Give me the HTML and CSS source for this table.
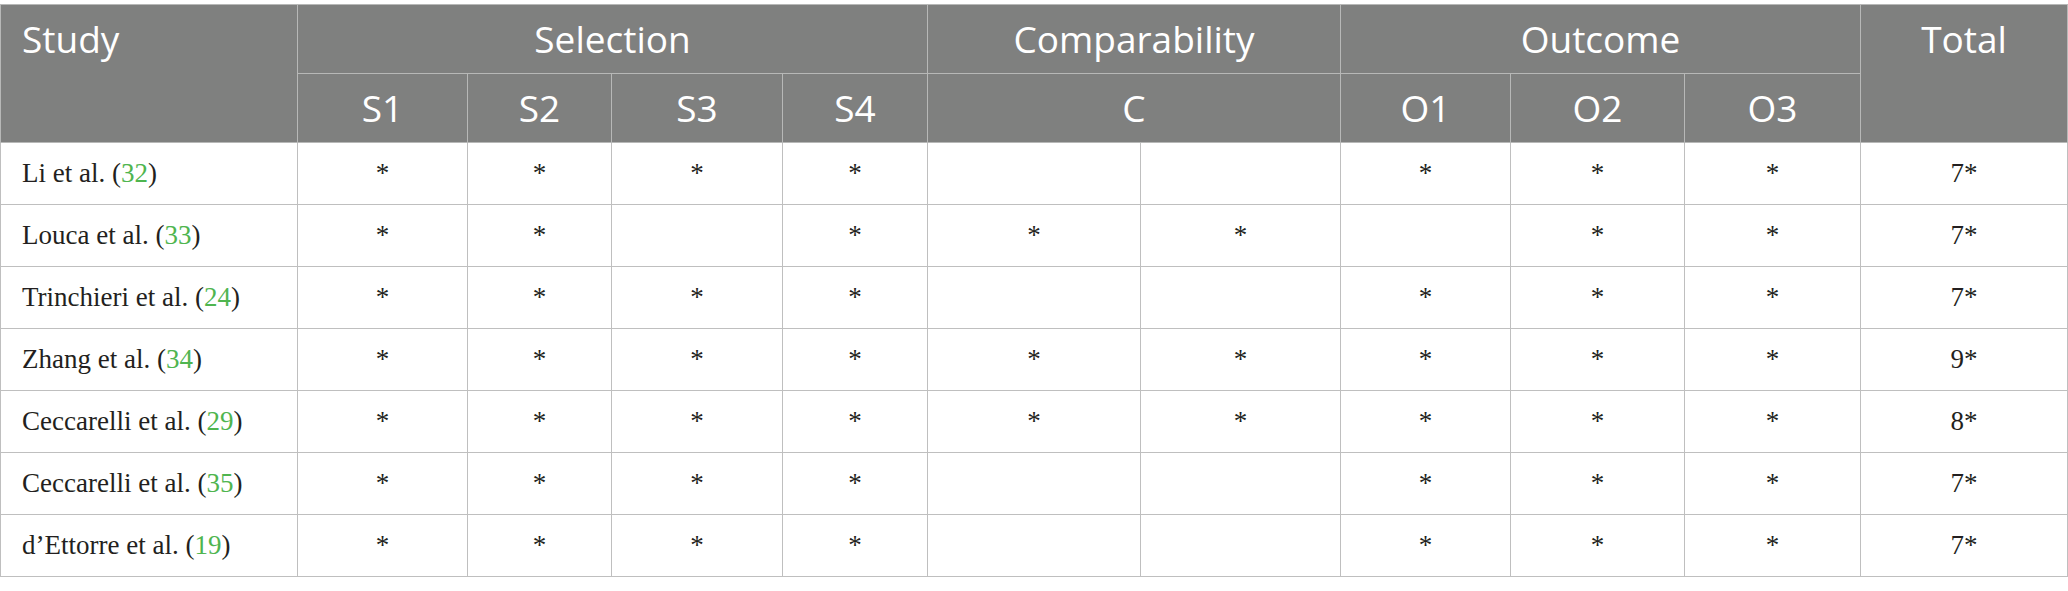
FILE: index.html
```html
<!DOCTYPE html>
<html lang="en">
<head>
<meta charset="utf-8">
<title>Quality assessment</title>
<link rel="stylesheet" href="styles.css">
</head>
<body>
<table class="nos">
  <colgroup>
    <col class="c-study">
    <col class="c-s1"><col class="c-s2"><col class="c-s3"><col class="c-s4">
    <col class="c-c1"><col class="c-c2">
    <col class="c-o1"><col class="c-o2"><col class="c-o3">
    <col class="c-total">
  </colgroup>
  <thead>
    <tr class="hrow">
      <th rowspan="2" class="h-left h-top">Study</th>
      <th colspan="4">Selection</th>
      <th colspan="2">Comparability</th>
      <th colspan="3">Outcome</th>
      <th rowspan="2" class="h-top">Total</th>
    </tr>
    <tr class="hrow">
      <th>S1</th><th>S2</th><th>S3</th><th>S4</th>
      <th colspan="2">C</th>
      <th>O1</th><th>O2</th><th>O3</th>
    </tr>
  </thead>
  <tbody>
    <tr><td class="study">Li et al. (<span class="ref">32</span>)</td><td>*</td><td>*</td><td>*</td><td>*</td><td></td><td></td><td>*</td><td>*</td><td>*</td><td>7*</td></tr>
    <tr><td class="study">Louca et al. (<span class="ref">33</span>)</td><td>*</td><td>*</td><td></td><td>*</td><td>*</td><td>*</td><td></td><td>*</td><td>*</td><td>7*</td></tr>
    <tr><td class="study">Trinchieri et al. (<span class="ref">24</span>)</td><td>*</td><td>*</td><td>*</td><td>*</td><td></td><td></td><td>*</td><td>*</td><td>*</td><td>7*</td></tr>
    <tr><td class="study">Zhang et al. (<span class="ref">34</span>)</td><td>*</td><td>*</td><td>*</td><td>*</td><td>*</td><td>*</td><td>*</td><td>*</td><td>*</td><td>9*</td></tr>
    <tr><td class="study">Ceccarelli et al. (<span class="ref">29</span>)</td><td>*</td><td>*</td><td>*</td><td>*</td><td>*</td><td>*</td><td>*</td><td>*</td><td>*</td><td>8*</td></tr>
    <tr><td class="study">Ceccarelli et al. (<span class="ref">35</span>)</td><td>*</td><td>*</td><td>*</td><td>*</td><td></td><td></td><td>*</td><td>*</td><td>*</td><td>7*</td></tr>
    <tr><td class="study">d’Ettorre et al. (<span class="ref">19</span>)</td><td>*</td><td>*</td><td>*</td><td>*</td><td></td><td></td><td>*</td><td>*</td><td>*</td><td>7*</td></tr>
  </tbody>
</table>
</body>
</html>
```
FILE: styles.css
```css
html, body {
  margin: 0;
  padding: 0;
  background: #ffffff;
}

body {
  padding-top: 4px;
}

.nos {
  border-collapse: collapse;
  table-layout: fixed;
  width: 2067px;
}

.c-study { width: 297px; }
.c-s1 { width: 170px; }
.c-s2 { width: 144px; }
.c-s3 { width: 171px; }
.c-s4 { width: 145px; }
.c-c1 { width: 213px; }
.c-c2 { width: 200px; }
.c-o1 { width: 170px; }
.c-o2 { width: 174px; }
.c-o3 { width: 176px; }
.c-total { width: 207px; }

.nos th {
  background: #7f807f;
  color: #ffffff;
  font-family: "Open Sans", "DejaVu Sans", sans-serif;
  font-weight: 400;
  font-size: 37px;
  line-height: 48px;
  height: 48px;
  padding: 10px 8px;
  text-align: center;
  vertical-align: middle;
  border: 1px solid #b7b8b7;
}

.nos th.h-top {
  vertical-align: top;
}

.nos th.h-left {
  text-align: left;
  padding-left: 21px;
}

.nos td {
  font-family: "Liberation Serif", "Times New Roman", serif;
  font-size: 27px;
  color: #231f20;
  height: 61px;
  padding: 0 8px;
  text-align: center;
  vertical-align: middle;
  border: 1px solid #bfbfbf;
}

.nos td.study {
  text-align: left;
  padding-left: 21px;
  white-space: nowrap;
}

.ref {
  color: #4fb54f;
}
```
